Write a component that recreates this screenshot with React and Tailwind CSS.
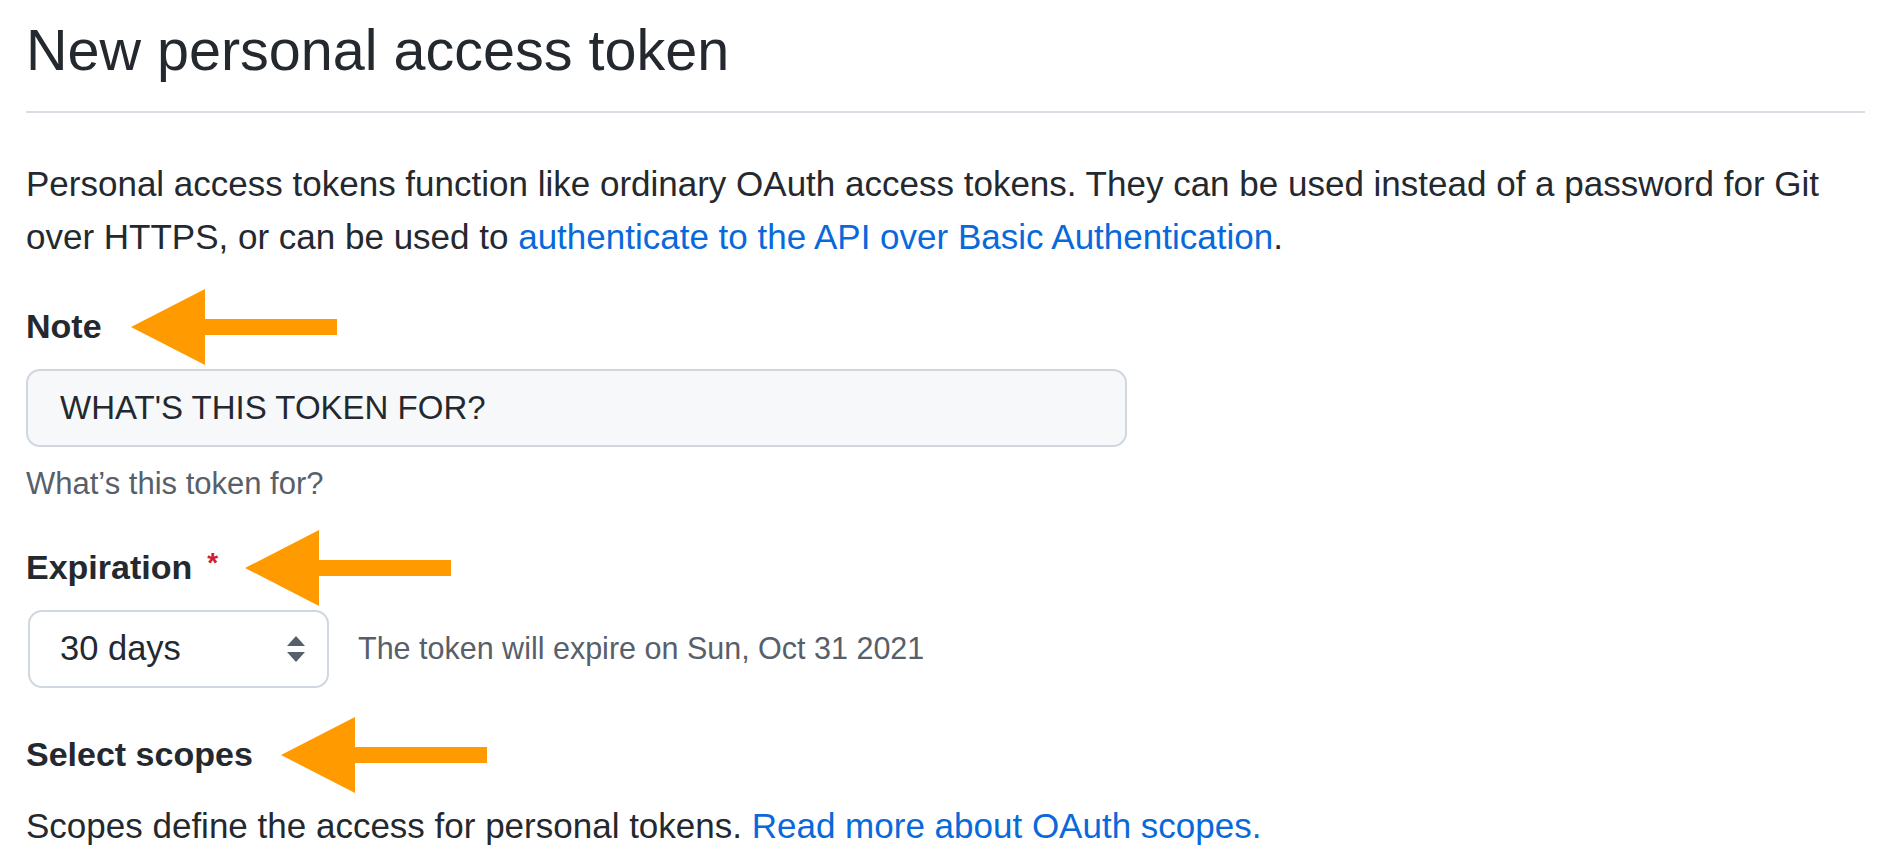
const Arrow = () => (
    <svg width="206" height="76" viewBox="0 0 206 76" className="shrink-0 -my-[12px]">
        <polygon points="0,38 74,0 74,30 206,30 206,46 74,46 74,76" fill="#ff9a00" />
    </svg>
);

const SelectCaret = () => (
    <svg width="20" height="26" viewBox="0 0 20 26">
        <polygon points="10,0 19,10 1,10" fill="#57606a" />
        <polygon points="1,16 19,16 10,26" fill="#57606a" />
    </svg>
);

export default function App() {
    return (
        <div className="min-h-screen bg-white text-[#24292f] font-['Liberation_Sans',Arial,sans-serif] pl-[26px] pr-[23px]">
            {/* Subhead */}
            <div className="pt-[16px] pb-[27px] border-b-2 border-[#d8dee4]">
                <h2 className="text-[57.5px] leading-[68px] font-normal">New personal access token</h2>
            </div>

            <p className="mt-[44px] text-[35px] leading-[53px]">
                Personal access tokens function like ordinary OAuth access tokens. They can be used instead of a password for Git over HTTPS, or can be used to{' '}
                <a href="#" className="text-[#0969da]">authenticate to the API over Basic Authentication</a>.
            </p>

            {/* Note */}
            <div className="mt-[37px] flex items-center gap-[29px]">
                <label className="text-[34px] leading-[53px] font-bold">Note</label>
                <Arrow />
            </div>
            <div className="mt-[16px] w-[1101px] h-[78px] bg-[#f6f8fa] border-2 border-[#d0d7de] rounded-[14px] flex items-center px-[32px]">
                <span className="text-[33px]">WHAT'S THIS TOKEN FOR?</span>
            </div>
            <p className="mt-[14px] text-[31px] leading-[45px] text-[#57606a]">What’s this token for?</p>

            {/* Expiration */}
            <div className="mt-[35px] flex items-center">
                <label className="text-[34px] leading-[53px] font-bold">Expiration</label>
                <span className="ml-[15px] mr-[27px] text-[28px] leading-[40px] text-[#cf222e] font-bold self-start mt-[2px]">*</span>
                <Arrow />
            </div>
            <div className="mt-[16px] flex items-center">
                <div className="ml-[2px] w-[301px] h-[78px] bg-white border-2 border-[#d0d7de] rounded-[14px] flex items-center justify-between pl-[30px] pr-[21px]">
                    <span className="text-[34.5px]">30 days</span>
                    <SelectCaret />
                </div>
                <span className="ml-[29px] text-[30.5px] text-[#57606a]">The token will expire on Sun, Oct 31 2021</span>
            </div>

            {/* Scopes */}
            <div className="mt-[40px] flex items-center gap-[28px]">
                <label className="text-[34px] leading-[53px] font-bold">Select scopes</label>
                <Arrow />
            </div>
            <p className="mt-[18px] text-[35px] leading-[53px]">
                Scopes define the access for personal tokens.{' '}
                <a href="#" className="text-[#0969da]">Read more about OAuth scopes.</a>
            </p>
        </div>
    );
}
